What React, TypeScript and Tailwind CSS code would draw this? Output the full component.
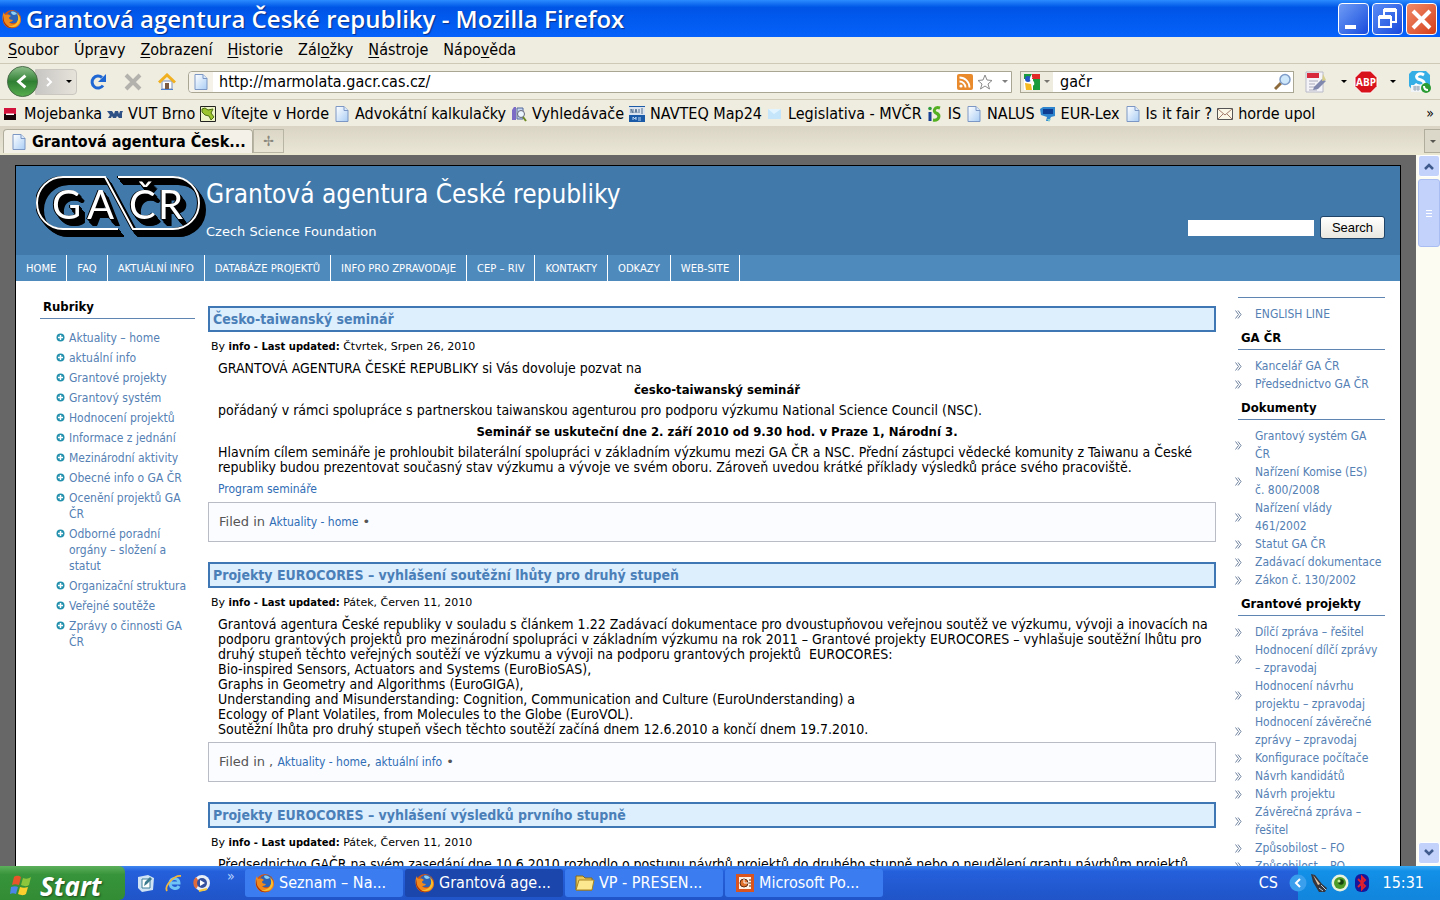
import React from 'react';

interface Post {
  title: string;
  date: string;
  body: React.ReactNode;
  filed?: React.ReactNode;
}

interface LinkGroup {
  title?: string;
  links: string[];
}

const FirefoxIcon = ({ className = 'w-5 h-5' }: { className?: string }) => (
  <svg viewBox="0 0 20 20" className={className}>
    <circle cx="10" cy="10" r="9" fill="#d9560f" />
    <circle cx="11" cy="8" r="6.3" fill="#2a62b8" />
    <path d="M9 3c2-1 5 0 6 2-1 0-2 1-3 1s-3-1-3-3z" fill="#8fd0f5" />
    <path d="M2 3c0 2 1 3 2 3 2-1 4 0 5 1-1 1-2 1-2 2s2 2 4 2c-1 2-3 2-4 2 2 3 7 3 9-1 1-3 0-6-1-7 4 2 5 8 2 11-4 5-12 4-15-1C0 11 0 6 2 3z" fill="#f08a1d" />
    <path d="M15 4c3 3 4 7 2 10-3 5-9 5-12 3 4 1 9-1 10-4 2-3 1-6 0-9z" fill="#fbc02d" />
    <path d="M2 6c-1 4 0 8 4 11 3 2 7 2 10 0-3 3-9 3-12 0C1 14 0 10 2 6z" fill="#a8300b" />
  </svg>
);

const PageIcon = () => (
  <svg viewBox="0 0 16 18" className="w-4 h-[18px]">
    <defs>
      <linearGradient id="sheet" x1="0" y1="0" x2="1" y2="1">
        <stop offset="0" stopColor="#ffffff" />
        <stop offset="1" stopColor="#a9cdf5" />
      </linearGradient>
    </defs>
    <path d="M2 1.500h8l4 4v11H2z" fill="url(#sheet)" stroke="#7d97c4" />
    <path d="M10 1.500v4h4" fill="#dbe9fb" stroke="#7d97c4" />
  </svg>
);

// The chained shadows build the solid black extrusion behind the white lines
const GacrLogo = () => (
  <svg viewBox="0 0 170 66" className="w-[170px] h-[66px] shrink-0" role="img" aria-label="GAČR">
    <g className="[filter:drop-shadow(-1px_0_0_#000)_drop-shadow(1px_1px_0_#000)_drop-shadow(2px_2px_0_#000)_drop-shadow(3px_4px_0_#000)]">
      <path d="M82 54H27A26 26 0 0 1 27 2H69L97 54H137A26 26 0 0 0 137 2H82" fill="none" stroke="#fff" strokeWidth="2" />
      <g fontSize="40" fill="#fff" className="[font-family:Lato,sans-serif]">
        <text x="16" y="44">G</text>
        <text x="51" y="44">A</text>
        <text x="93" y="44">Č</text>
        <text x="122" y="44">R</text>
      </g>
    </g>
  </svg>
);

const Caret = () => <span className="w-0 h-0 border-x-[3px] border-x-transparent border-t-[3px] border-t-black" />;

const menus = [
  ['', 'S', 'oubor'],
  ['Úpr', 'a', 'vy'],
  ['', 'Z', 'obrazení'],
  ['', 'H', 'istorie'],
  ['Zál', 'o', 'žky'],
  ['', 'N', 'ástroje'],
  ['Nápo', 'v', 'ěda'],
];

const bookmarks: { label: string; icon: React.ReactNode }[] = [
  {
    label: 'Mojebanka',
    icon: (
      <svg viewBox="0 0 16 16" className="w-4 h-4">
        <path d="M1 2h12v6H1z" fill="#d3123c" />
        <path d="M1 8h12v6H1z" fill="#160408" />
        <path d="M3 7.500h8v1.500H3z" fill="#fff" />
      </svg>
    ),
  },
  {
    label: 'VUT Brno',
    icon: (
      <svg viewBox="0 0 16 16" className="w-4 h-4">
        <path d="M0 5h5l2 3 1-3h3l1 3 1-3h3l-1 2v5h-3l-2-2-1 2H6l-1-2-1 2H1l2-3z" fill="#2f5286" />
      </svg>
    ),
  },
  {
    label: 'Vítejte v Horde',
    icon: (
      <svg viewBox="0 0 16 16" className="w-4 h-4">
        <path d="M.5.500h15v15H.5z" fill="#eef3c8" stroke="#222" />
        <path d="M2 3l3-1 3 2 5-1-2 4 3 4-3 3-2-4-4-1-3-3z" fill="#9cc42c" stroke="#4c6d12" />
      </svg>
    ),
  },
  { label: 'Advokátní kalkulačky', icon: <PageIcon /> },
  {
    label: 'Vyhledávače',
    icon: (
      <svg viewBox="0 0 16 16" className="w-4 h-4">
        <path d="M1 4l2-3h2v13H1z" fill="#7d6cc6" />
        <path d="M6 2h6v11H6z" fill="#c9d6ef" stroke="#51689c" />
        <circle cx="10" cy="8" r="3.500" fill="#eaf5ff" stroke="#667" />
        <path d="M12 11l3 4" stroke="#6e8a24" strokeWidth="2" />
      </svg>
    ),
  },
  {
    label: 'NAVTEQ Map24',
    icon: (
      <svg viewBox="0 0 16 16" className="w-4 h-4">
        <path d="M0 0h16v9H0z" fill="#dbe3ee" />
        <path d="M0 0h16v1H0zM0 9h16v7H0z" fill="#1b5aa6" />
        <path d="M2 3v4M2 3l2 4V3M6 7l1-4 1 4M10 3v4M12 3h2M12 5h2M12 7h2" stroke="#54708f" fill="none" />
        <path d="M4 14v-3l2 2 1-2v3M9 12h3M9 14h3" stroke="#b9d3f2" fill="none" />
      </svg>
    ),
  },
  {
    label: 'Legislativa - MVČR',
    icon: (
      <svg viewBox="0 0 16 16" className="w-4 h-4">
        <path d="M1 3h13v10H1z" fill="#c5e6fa" />
        <path d="M1 3l6 5 7-5" fill="#e2f4ff" />
      </svg>
    ),
  },
  {
    label: 'IS',
    icon: (
      <svg viewBox="0 0 16 16" className="w-4 h-4">
        <path d="M3 6v9" stroke="#173f93" strokeWidth="3" />
        <circle cx="3" cy="2.500" r="1.800" fill="#2e9c3c" />
        <path d="M13 2C7 0 6 6 9 7c5 2 3 8-3 7" stroke="#54b021" strokeWidth="3" fill="none" />
      </svg>
    ),
  },
  { label: 'NALUS', icon: <PageIcon /> },
  {
    label: 'EUR-Lex',
    icon: (
      <svg viewBox="0 0 16 16" className="w-4 h-4">
        <path d="M0 3l3-2h12v9l-4 1-2 4H6l1-4-6-2z" fill="#2f86cf" />
        <path d="M3 3h10v5H3z" fill="#0f3d91" />
        <path d="M7 13h4l-2 3z" fill="#7fd0d0" />
      </svg>
    ),
  },
  { label: 'Is it fair ?', icon: <PageIcon /> },
  {
    label: 'horde upol',
    icon: (
      <svg viewBox="0 0 16 16" className="w-4 h-4">
        <path d="M.5 2.500h15v11H.5z" fill="#fbf8e8" stroke="#555" />
        <path d="M1 3l7 6 7-6M1 13l5-5M15 13l-5-5" fill="none" stroke="#a37b6a" />
      </svg>
    ),
  },
];

const siteNav = ['Home', 'FAQ', 'Aktuální info', 'Databáze projektů', 'Info pro zpravodaje', 'CEP – RIV', 'Kontakty', 'Odkazy', 'Web-site'];

const rubriky = [
  'Aktuality – home',
  'aktuální info',
  'Grantové projekty',
  'Grantový systém',
  'Hodnocení projektů',
  'Informace z jednání',
  'Mezinárodní aktivity',
  'Obecné info o GA ČR',
  'Ocenění projektů GA ČR',
  'Odborné poradní orgány – složení a statut',
  'Organizační struktura',
  'Veřejné soutěže',
  'Zprávy o činnosti GA ČR',
];

const sideGroups: LinkGroup[] = [
  { links: ['ENGLISH LINE'] },
  { title: 'GA ČR', links: ['Kancelář GA ČR', 'Předsednictvo GA ČR'] },
  {
    title: 'Dokumenty',
    links: ['Grantový systém GA ČR', 'Nařízení Komise (ES) č.\u00a0800/2008', 'Nařízení vlády 461/2002', 'Statut GA ČR', 'Zadávací dokumentace', 'Zákon č. 130/2002'],
  },
  {
    title: 'Grantové projekty',
    links: [
      'Dílčí zpráva – řešitel',
      'Hodnocení dílčí zprávy – zpravodaj',
      'Hodnocení návrhu projektu – zpravodaj',
      'Hodnocení závěrečné zprávy – zpravodaj',
      'Konfigurace počítače',
      'Návrh kandidátů',
      'Návrh projektu',
      'Závěrečná zpráva – řešitel',
      'Způsobilost – FO',
      'Způsobilost – PO',
    ],
  },
];

const TextLink = ({ children }: { children: React.ReactNode }) => (
  <a href="#" className="text-xs text-[#2f6db5] [font-family:'DejaVu_Sans_Condensed','DejaVu_Sans',sans-serif]">
    {children}
  </a>
);

const posts: Post[] = [
  {
    title: 'Česko-taiwanský seminář',
    date: 'Čtvrtek, Srpen 26, 2010',
    body: (
      <>
        <p>GRANTOVÁ AGENTURA ČESKÉ REPUBLIKY si Vás dovoluje pozvat na</p>
        <p className="text-center text-[13px] leading-[15px] font-bold">česko-taiwanský seminář</p>
        <p>pořádaný v rámci spolupráce s partnerskou taiwanskou agenturou pro podporu výzkumu National Science Council (NSC).</p>
        <p className="text-center text-[13px] leading-[15px] font-bold">Seminář se uskuteční dne 2. září 2010 od 9.30 hod. v Praze 1, Národní 3.</p>
        <p>
          Hlavním cílem semináře je prohloubit bilaterální spolupráci v základním výzkumu mezi GA ČR a NSC. Přední zástupci vědecké komunity z Taiwanu a České
          republiky budou prezentovat současný stav výzkumu a vývoje ve svém oboru. Zároveň uvedou krátké příklady výsledků práce svého pracoviště.
        </p>
        <p><TextLink>Program semináře</TextLink></p>
      </>
    ),
    filed: <>Filed in <TextLink>Aktuality - home</TextLink> •</>,
  },
  {
    title: 'Projekty EUROCORES – vyhlášení soutěžní lhůty pro druhý stupeň',
    date: 'Pátek, Červen 11, 2010',
    body: (
      <p>
        Grantová agentura České republiky v souladu s článkem 1.22 Zadávací dokumentace pro dvoustupňovou veřejnou soutěž ve výzkumu, vývoji a inovacích na
        podporu grantových projektů pro mezinárodní spolupráci v základním výzkumu na rok 2011 – Grantové projekty EUROCORES – vyhlašuje soutěžní lhůtu pro
        druhý stupeň těchto veřejných soutěží ve výzkumu a vývoji na podporu grantových projektů&nbsp; EUROCORES:<br />
        Bio-inspired Sensors, Actuators and Systems (EuroBioSAS),<br />
        Graphs in Geometry and Algorithms (EuroGIGA),<br />
        Understanding and Misunderstanding: Cognition, Communication and Culture (EuroUnderstanding) a<br />
        Ecology of Plant Volatiles, from Molecules to the Globe (EuroVOL).<br />
        Soutěžní lhůta pro druhý stupeň všech těchto soutěží začíná dnem 12.6.2010 a končí dnem 19.7.2010.
      </p>
    ),
    filed: <>Filed in , <TextLink>Aktuality - home</TextLink>, <TextLink>aktuální info</TextLink> •</>,
  },
  {
    title: 'Projekty EUROCORES – vyhlášení výsledků prvního stupně',
    date: 'Pátek, Červen 11, 2010',
    body: <p>Předsednictvo GAČR na svém zasedání dne 10.6.2010 rozhodlo o postupu návrhů projektů do druhého stupně nebo o neudělení grantu návrhům projektů</p>,
  },
];

const TitleBar = () => (
  <div className="h-[37px] shrink-0 flex items-center gap-1 pl-[2px] pr-[3px] bg-linear-to-b from-[#2b8bff] via-[#0054e6] via-20% to-[#0562fb]">
    <FirefoxIcon />
    <h1 className="grow text-2xl font-semibold text-white whitespace-nowrap [font-family:'Open_Sans',sans-serif] [text-shadow:1px_1px_1px_#0a2f8a]">
      Grantová agentura České republiky - Mozilla Firefox
    </h1>
    <div className="flex gap-[3px]">
      <button aria-label="Minimize" className="w-[31px] h-8 border border-white rounded-[4px] bg-linear-to-br from-[#6f9bf5] to-[#1a48dc]">
        <svg viewBox="0 0 29 30"><path d="M6 21h11v4H6z" fill="#fff" /></svg>
      </button>
      <button aria-label="Restore" className="w-[31px] h-8 border border-white rounded-[4px] bg-linear-to-br from-[#5b8bf5] to-[#1a48dc]">
        <svg viewBox="0 0 29 30" fill="none" stroke="#fff" strokeWidth="2">
          <path d="M6 13h12v10H6zM11 11V6h12v12h-4" />
          <path d="M6 13h12M11 6h12" strokeWidth="4" />
        </svg>
      </button>
      <button aria-label="Close" className="w-[31px] h-8 border border-white rounded-[4px] bg-linear-to-br from-[#f08a68] to-[#d43c12]">
        <svg viewBox="0 0 29 30"><path d="M6 7l17 17M23 7L6 24" stroke="#fff" strokeWidth="4" /></svg>
      </button>
    </div>
  </div>
);

const Toolbar = () => (
  <div className="h-9 shrink-0 flex items-center pl-[6px] pr-2 border-t border-[#cdc9b6]">
    <button aria-label="Back" className="z-10">
      <svg viewBox="0 0 34 34" className="w-[33px] h-[33px]">
        <defs>
          <linearGradient id="back" x1="0" y1="0" x2="0" y2="1">
            <stop offset="0" stopColor="#8fc08c" />
            <stop offset=".5" stopColor="#2f7f33" />
            <stop offset="1" stopColor="#58ae4e" />
          </linearGradient>
        </defs>
        <circle cx="17" cy="17" r="15.500" fill="url(#back)" stroke="#4b6b4a" />
        <path d="M20 11l-7 6 7 6" fill="none" stroke="#fff" strokeWidth="3" />
      </svg>
    </button>
    <div className="h-[26px] w-[42px] -ml-1 pl-2 flex items-center gap-3 border border-[#c9c7c0] rounded-r-[4px] bg-linear-to-r from-[#c8c6c4] to-[#e6e3da]">
      <button aria-label="Forward">
        <svg viewBox="0 0 10 10" className="w-[10px] h-[10px]"><path d="M3 1l4 4-4 4" fill="none" stroke="#fff" strokeWidth="2" /></svg>
      </button>
      <button aria-label="History" className="flex"><Caret /></button>
    </div>
    <button aria-label="Reload" className="ml-3">
      <svg viewBox="0 0 18 18" className="w-[18px] h-[18px]">
        <path d="M14 12.500A6 6 0 1 1 13 4.500" fill="none" stroke="#1f68d4" strokeWidth="3" />
        <path d="M17 1v8H9z" fill="#1f68d4" />
      </svg>
    </button>
    <button aria-label="Stop" className="ml-[17px]">
      <svg viewBox="0 0 18 18" className="w-[18px] h-[18px]"><path d="M2 2l14 14M16 2L2 16" stroke="#b4b2ac" strokeWidth="4" /></svg>
    </button>
    <button aria-label="Home" className="ml-4">
      <svg viewBox="0 0 18 18" className="w-[18px] h-[18px]">
        <path d="M4 8h10v8H4z" fill="#fff" stroke="#7c92bd" />
        <path d="M1 9.500L9 2l8 7.500" fill="none" stroke="#f0b020" strokeWidth="3" />
        <path d="M7 10h4v6H7z" fill="#7c5a42" />
        <path d="M3 16.500h12" stroke="#4d80cf" />
      </svg>
    </button>
    <div className="grow ml-3 h-[22px] flex items-center border border-[#a9a794] rounded-l-[4px] bg-white">
      <div className="w-6 h-full flex items-center justify-center rounded-l-[4px] bg-[#f4f2e9]"><PageIcon /></div>
      <input aria-label="Address" defaultValue="http://marmolata.gacr.cas.cz/" className="grow min-w-0 pl-[6px] text-base outline-none" />
      <svg viewBox="0 0 16 16" className="w-4 h-4">
        <rect width="16" height="16" rx="2" fill="#e98a2d" />
        <circle cx="4" cy="12" r="1.600" fill="#fff" />
        <path d="M2.500 7.500a6 6 0 0 1 6 6M2.500 3.500a10 10 0 0 1 10 10" fill="none" stroke="#fff" strokeWidth="1.800" />
      </svg>
      <svg viewBox="0 0 16 16" className="w-4 h-4 ml-1">
        <path d="M8 1l2 5 5 .5-4 3.500 1.500 5L8 12l-4.500 3L5 10 1 6.500 6 6z" fill="#fff" stroke="#8b8b8b" />
      </svg>
      <span className="ml-[9px] mr-[3px] flex opacity-50"><Caret /></span>
    </div>
    <div className="ml-2 w-[274px] h-[22px] flex items-center border border-[#a9a794] bg-white">
      <div className="w-8 h-full flex items-center gap-1 pl-[3px] bg-[#eeebdf]">
        <svg viewBox="0 0 16 16" className="w-4 h-4">
          <path d="M0 0h16v16H0z" fill="#fff" />
          <path d="M8 0h8v5H8z" fill="#e12a25" />
          <path d="M9 5h7v11H9z" fill="#199a3b" />
          <path d="M0 0h8L5 5H0z" fill="#199a3b" />
          <circle cx="4" cy="5" r="3" fill="#2457c5" />
          <path d="M1 9l6 1 1 6H2z" fill="#f5b921" />
          <path d="M8 3c-4 3 3 4 1 8" stroke="#fff" strokeWidth="2" fill="none" />
        </svg>
        <span className="flex opacity-50"><Caret /></span>
      </div>
      <input aria-label="Search web" defaultValue="gačr" className="grow min-w-0 pl-[7px] text-base outline-none" />
      <svg viewBox="0 0 18 18" className="w-[18px] h-[18px] mr-[1px]">
        <path d="M1 16l6-6" stroke="#8d6a3b" strokeWidth="3" />
        <circle cx="11" cy="6.500" r="5" fill="#cfe7fb" stroke="#7f9cc8" strokeWidth="1.500" />
      </svg>
    </div>
    <div className="ml-[11px] flex items-center">
      <svg viewBox="0 0 22 22" className="w-[22px] h-[22px]">
        <path d="M1 1h17v20H1z" fill="#f4f4f8" stroke="#b9bac8" />
        <path d="M2 2h12v5H2z" fill="#d8283c" />
        <path d="M4 10h9M4 13h6M4 16h9M4 19h8" stroke="#a9aabb" />
        <path d="M9 16l8-8 4 2-8 8-5 1z" fill="#8088ae" />
        <path d="M18 3l3 6-4 1z" fill="#d9cf8c" />
      </svg>
      <span className="ml-[14px] flex"><Caret /></span>
      <svg viewBox="0 0 24 24" className="ml-[7px] w-6 h-6">
        <path d="M7.500 1h9L23 7.500v9L16.500 23h-9L1 16.500v-9z" fill="#d8131c" stroke="#fff" />
        <text x="12" y="16" textAnchor="middle" fontFamily="Open Sans, sans-serif" fontWeight="700" fontSize="10" fill="#fff">ABP</text>
      </svg>
      <span className="ml-3 flex"><Caret /></span>
      <svg viewBox="0 0 24 24" className="ml-3 w-6 h-6">
        <path d="M4 1h14l4 4v13l-3 3H5l-4-5V4z" fill="#35aee6" />
        <path d="M16 5c-5-3-10 1-6 4 3 1 7 2 6 5-2 3-7 2-9 0" fill="none" stroke="#fff" strokeWidth="3" />
        <path d="M3 15h11v7H3z" fill="#f2f5f7" />
        <path d="M5 17h7M5 19h7M7 16v5M10 16v5" stroke="#9ab" />
        <circle cx="18" cy="18" r="5" fill="#2b9c34" />
        <path d="M16 16c0 3 2 4 4 4" stroke="#fff" strokeWidth="2" fill="none" />
      </svg>
    </div>
  </div>
);

const BrowserChrome = () => (
  <header className="shrink-0 flex flex-col bg-[#efece0] text-black">
    <TitleBar />
    <nav className="h-[26px] flex items-center gap-[15px] px-2">
      {menus.map(([before, key, after]) => (
        <button key={before + key + after} className="text-base">
          {before}
          <u className="underline-offset-2">{key}</u>
          {after}
        </button>
      ))}
    </nav>
    <Toolbar />
    <div className="h-[27px] flex items-center gap-[5px] pl-[3px] pr-[6px] border-t border-[#cdc9b6]">
      {bookmarks.map((b) => (
        <a key={b.label} href="#" className="pt-[2px] flex items-center gap-[5px] text-base whitespace-nowrap">
          {b.icon}
          {b.label}
        </a>
      ))}
      <button aria-label="More bookmarks" className="ml-auto text-sm">»</button>
    </div>
    <div className="h-[29px] flex items-end bg-linear-to-b from-[#d9d4c4] to-[#eae6d6] border-b-2 border-[#e9e7cf]">
      <button className="ml-[3px] w-[250px] h-6 pl-[7px] flex items-center gap-[5px] border border-b-0 border-[#b1ad9c] rounded-t-[4px] bg-[#f3f1e8] text-base font-bold whitespace-nowrap">
        <PageIcon />
        Grantová agentura Česk...
      </button>
      <button aria-label="New tab" className="w-[31px] h-6 flex items-center justify-center border border-[#b9b5a4] text-[#8a887e] text-sm">✢</button>
      <button aria-label="List tabs" className="ml-auto w-4 h-6 flex items-center justify-center border border-r-0 border-[#b1ad9c] bg-[#dcd8c9]">
        <span className="flex opacity-60"><Caret /></span>
      </button>
    </div>
  </header>
);

const SiteHeader = () => (
  <>
    <div className="h-[89px] flex pl-5 pr-[15px] bg-[#4179ab] text-white">
      <div className="pt-[9px]"><GacrLogo /></div>
      <div className="grow pt-[10px]">
        <h2 className="text-[26px] leading-9">Grantová agentura České republiky</h2>
        <p className="mt-3 text-[13px] leading-4 [font-family:'DejaVu_Sans',sans-serif]">Czech Science Foundation</p>
      </div>
      <form className="self-end mb-4 flex items-center gap-[6px]">
        <input aria-label="Search site" className="w-[126px] h-4 px-1 bg-white text-xs text-black" />
        <button type="button" className="w-[65px] h-[23px] border border-[#1f4468] rounded-[3px] bg-linear-to-b from-white to-[#e9e7df] text-[13px] text-black [font-family:'Liberation_Sans',sans-serif]">
          Search
        </button>
      </form>
    </div>
    <nav className="h-[26px] flex bg-[#4f8abd] text-white text-[10px] uppercase [font-family:'DejaVu_Sans',sans-serif]">
      {siteNav.map((item) => (
        <a key={item} href="#" className="px-[10px] flex items-center border-r border-white whitespace-nowrap">
          {item}
        </a>
      ))}
    </nav>
  </>
);

const LeftColumn = () => (
  <aside className="w-[155px] shrink-0 pt-[18px]">
    <h3 className="pl-[3px] pb-[3px] border-b border-[#5f86b3] text-[13px] leading-4 font-bold text-black">Rubriky</h3>
    <ul className="mt-[11px] pl-4 flex flex-col gap-1 text-xs leading-4">
      {rubriky.map((item) => (
        <li key={item} className="flex gap-1">
          <svg viewBox="0 0 9 9" className="w-[9px] h-[9px] mt-[3px] shrink-0">
            <circle cx="4.500" cy="4.500" r="4" fill="#2390ae" />
            <path d="M4.500 2v5M2 4.500h5" stroke="#fff" strokeWidth="1.500" />
          </svg>
          <a href="#" className="text-[#5480b4]">{item}</a>
        </li>
      ))}
    </ul>
  </aside>
);

const RightColumn = () => (
  <aside className="w-[150px] shrink-0 pt-4 text-xs">
    {sideGroups.map((group, i) => (
      <section key={i}>
        {group.title ? (
          <h3 className="ml-[3px] mb-[7px] h-[27px] pl-[3px] pt-[6px] border-b border-[#5f86b3] text-[13px] leading-[18px] font-bold text-black">{group.title}</h3>
        ) : (
          <div className="ml-[3px] mb-[7px] border-b border-[#5f86b3]" />
        )}
        <ul className="pr-[2px]">
          {group.links.map((link) => (
            <li key={link} className="flex items-center gap-[13px] leading-[18px]">
              <svg viewBox="0 0 7 9" className="w-[7px] h-[9px] shrink-0">
                <path d="M.5.500l3 4-3 4M3 .5l3 4-3 4" fill="none" stroke="#6c7f9c" />
              </svg>
              <a href="#" className="text-[#5480b4]">{link}</a>
            </li>
          ))}
        </ul>
      </section>
    ))}
  </aside>
);

const PostView = ({ post }: { post: Post }) => (
  <article className="mb-5">
    <h2 className="h-[26px] pl-[3px] flex items-center border-2 border-[#3f76b4] bg-[#ddeefd] text-sm font-bold text-[#4a7fb8]">{post.title}</h2>
    <p className="mt-[7px] mb-[7px] pl-[3px] text-[11px] leading-[15px] [font-family:'DejaVu_Sans',sans-serif]">
      By <b className="text-[10px]">info - Last updated:</b> {post.date}
    </p>
    <div className="pl-[10px] flex flex-col gap-[6px] text-sm leading-[15px]">{post.body}</div>
    {post.filed && (
      <div className="mt-[5px] h-10 pl-[10px] border border-[#b9bcc4] bg-[#fbfcff] text-[13px] leading-[38px] text-[#555] [font-family:'DejaVu_Sans',sans-serif]">
        {post.filed}
      </div>
    )}
  </article>
);

const tasks = [
  { label: 'Seznam – Na...', kind: 'firefox', active: false },
  { label: 'Grantová age...', kind: 'firefox', active: true },
  { label: 'VP - PRESEN...', kind: 'folder', active: false },
  { label: 'Microsoft Po...', kind: 'ppt', active: false },
];

const TaskIcon = ({ kind }: { kind: string }) => {
  if (kind === 'folder') {
    return (
      <svg viewBox="0 0 20 20" className="w-5 h-5">
        <path d="M1 3h7l2 2h7v12H1z" fill="#e8c75a" stroke="#8a6a14" />
        <path d="M4 7h15l-2 10H1z" fill="#fbe88f" stroke="#a98420" />
      </svg>
    );
  }
  if (kind === 'ppt') {
    return (
      <svg viewBox="0 0 20 20" className="w-5 h-5">
        <path d="M1 1h18v18H1z" fill="#d9541e" />
        <path d="M4 4h12v12H4z" fill="#fff3e8" />
        <circle cx="9" cy="10" r="4" fill="#e0712c" stroke="#5b2a12" />
        <path d="M9 6v4h4" stroke="#fff" fill="none" />
        <path d="M15 6v8" stroke="#5b2a12" strokeDasharray="2 1" />
      </svg>
    );
  }
  return <FirefoxIcon />;
};

const Taskbar = () => (
  <footer className="h-[34px] shrink-0 flex items-stretch bg-linear-to-b from-[#3f86f0] via-[#2560dc] via-15% to-[#2054c8] text-white">
    <button className="w-[125px] pl-[10px] flex items-center gap-[6px] rounded-r-[6px] bg-linear-to-b from-[#5cb05c] via-[#37943a] via-25% to-[#328c34]">
      <svg viewBox="0 0 24 24" className="w-6 h-6 mt-1">
        <path d="M4 4c3-2 5-1 7 0l-2 8c-3-1-5-1-7 0z" fill="#e8552a" />
        <path d="M13 5c3 1 5 1 8-1l-2 8c-3 2-5 1-8 0z" fill="#8cc63c" />
        <path d="M1 14c3-1 5-1 7 0l-2 7c-2-1-4-1-6 0z" fill="#4c86e8" />
        <path d="M10 14c3 1 5 1 8 0l-2 7c-3 2-5 1-8 0z" fill="#fbcf2d" />
      </svg>
      <span className="mt-[6px] text-[26px] leading-7 font-bold italic [font-family:'Open_Sans',sans-serif] [text-shadow:1px_1px_2px_#1c4a1c]">Start</span>
    </button>
    <div className="w-[120px] shrink-0 pl-3 flex items-center gap-[10px]">
      <button aria-label="Show desktop">
        <svg viewBox="0 0 18 18" className="w-[18px] h-[18px]">
          <path d="M1 3l10-2 6 3-1 12-11 2-4-4z" fill="#cfe3f5" />
          <path d="M5 5h8v9H5z" fill="#fff" stroke="#3f7f99" />
          <path d="M7 12l1-4 5-5 2 2-5 5z" fill="#3c7b8f" />
        </svg>
      </button>
      <button aria-label="Internet Explorer">
        <svg viewBox="0 0 18 18" className="w-[18px] h-[18px]">
          <path d="M14 12c-2 4-9 3-9-3s9-6 9 0H6" fill="none" stroke="#6fc3f5" strokeWidth="3" />
          <path d="M2 17C-1 12 9 1 16 2" fill="none" stroke="#f2b63c" strokeWidth="1.800" />
        </svg>
      </button>
      <button aria-label="Media Player">
        <svg viewBox="0 0 18 18" className="w-[18px] h-[18px]">
          <circle cx="9" cy="9" r="8" fill="#e9eef7" />
          <path d="M3 3a8 8 0 0 0 0 12l4-6z" fill="#e06a3a" />
          <circle cx="9" cy="9" r="5" fill="#35509c" />
          <path d="M7 6l5 3-5 3z" fill="#fff" />
          <path d="M6 17l8-2" stroke="#f5c73b" strokeWidth="2" />
        </svg>
      </button>
      <span className="self-start ml-[6px] text-sm text-[#b8d4ff]">»</span>
    </div>
    <div className="flex gap-[2px] py-[3px]">
      {tasks.map((task) => (
        <button
          key={task.label}
          className={`w-[158px] pl-[10px] flex items-center gap-1 rounded-[3px] text-base whitespace-nowrap ${task.active ? 'bg-[#1b46ac]' : 'bg-[#3b7df0]'}`}
        >
          <TaskIcon kind={task.kind} />
          {task.label}
        </button>
      ))}
    </div>
    <span className="ml-auto mr-5 self-center text-base">CS</span>
    <div className="w-[142px] flex items-center bg-linear-to-b from-[#35a9f5] via-[#1290e8] via-15% to-[#1285dc]">
      <button aria-label="Show hidden icons" className="-ml-[9px]">
        <svg viewBox="0 0 18 18" className="w-[18px] h-[18px]">
          <circle cx="9" cy="9" r="8.500" fill="#3aa0ee" />
          <path d="M11 5L7 9l4 4" stroke="#fff" strokeWidth="2" fill="none" />
        </svg>
      </button>
      <svg viewBox="0 0 18 20" className="w-[18px] h-5 ml-[3px]">
        <path d="M1 1l4 1 7 9 5 4-2 4H9L3 9z" fill="#37363c" />
        <path d="M3 2l7 9-2 1z" fill="#e6c9a8" />
        <path d="M11 12l5 5M9 15l4 3" stroke="#bcd" />
      </svg>
      <svg viewBox="0 0 18 18" className="w-[18px] h-[18px] ml-[3px]">
        <circle cx="9" cy="9" r="8.500" fill="#e9f2dc" />
        <circle cx="9" cy="9" r="6" fill="#4d9c2a" />
        <circle cx="10" cy="8" r="2.800" fill="#16420e" />
        <circle cx="8" cy="7" r="1.500" fill="#c8ee9a" />
      </svg>
      <svg viewBox="0 0 16 20" className="w-4 h-5 ml-[5px]">
        <rect x="1" y="1" width="14" height="18" rx="6" fill="#14189c" />
        <path d="M4 6l7 7-3 3V4l3 3-7 7" fill="none" stroke="#e0202c" strokeWidth="2" />
      </svg>
      <time className="ml-auto mr-4 text-base">15:31</time>
    </div>
  </footer>
);

const App: React.FC = () => {
  return (
    <div className="h-screen flex flex-col overflow-hidden [font-family:'DejaVu_Sans_Condensed','DejaVu_Sans',sans-serif]">
      <BrowserChrome />
      <div className="grow min-h-0 flex">
        <div className="grow min-w-0 overflow-hidden px-[15px] pt-[10px] bg-[#676767]">
          <div className="border border-b-0 border-black bg-white">
            <SiteHeader />
            <div className="flex pl-6 pr-[15px]">
              <LeftColumn />
              <main className="grow min-w-0 ml-[13px] mr-[19px] pt-[25px] text-black">
                {posts.map((post) => (
                  <PostView key={post.title} post={post} />
                ))}
              </main>
              <RightColumn />
            </div>
          </div>
        </div>
        {/* Window scrollbar */}
        <div className="w-6 pl-[2px] shrink-0 flex flex-col bg-[#fcfcf3]">
          <button aria-label="Scroll up" className="h-[22px] flex items-center justify-center border border-white rounded-[3px] bg-[#c3d2fb]">
            <svg viewBox="0 0 12 8" className="w-3 h-2"><path d="M2 7l4-4 4 4" fill="none" stroke="#3f5a8c" strokeWidth="2.500" /></svg>
          </button>
          <div className="mt-[2px] h-[68px] flex flex-col items-center justify-center gap-[2px] border border-[#a9bdf2] rounded-[3px] bg-[#c3d2fb]">
            <span className="w-[6px] h-px bg-white" />
            <span className="w-[6px] h-px bg-white" />
            <span className="w-[6px] h-px bg-white" />
          </div>
          <button aria-label="Scroll down" className="mt-auto mb-[2px] h-[22px] flex items-center justify-center border border-white rounded-[3px] bg-[#c3d2fb]">
            <svg viewBox="0 0 12 8" className="w-3 h-2"><path d="M2 1l4 4 4-4" fill="none" stroke="#3f5a8c" strokeWidth="2.500" /></svg>
          </button>
        </div>
      </div>
      <Taskbar />
    </div>
  );
};

export default App;
